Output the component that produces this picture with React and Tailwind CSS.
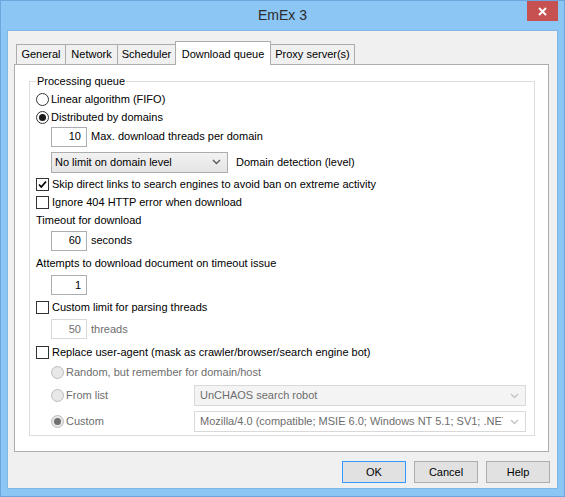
import clsx from 'clsx';

const Chevron = ({ muted }) => (
    <svg width="9" height="6" viewBox="0 0 9 6" className="shrink-0">
        <path d="M1 1 L4.5 4.5 L8 1" fill="none" stroke={muted ? '#c4c4c4' : '#5a5a5a'} strokeWidth="1.4" />
    </svg>
);

const Radio = ({ checked, disabled }) => (
    <span
        className={clsx(
            'flex h-[13px] w-[13px] shrink-0 items-center justify-center rounded-full border',
            disabled ? 'border-[#bcbcbc] bg-[#e8e8e8]' : 'border-[#333333] bg-white'
        )}
    >
        {checked && (
            <span className={clsx('h-[7px] w-[7px] rounded-full', disabled ? 'bg-[#6f6f6f]' : 'bg-[#1a1a1a]')} />
        )}
    </span>
);

const Checkbox = ({ checked }) => (
    <span className="flex h-[13px] w-[13px] shrink-0 items-center justify-center border border-[#333333] bg-white">
        {checked && (
            <svg width="11" height="11" viewBox="0 0 11 11">
                <path d="M2 5.5 L4.3 8 L9 2.5" fill="none" stroke="#000" strokeWidth="1.7" />
            </svg>
        )}
    </span>
);

const NumBox = ({ value, disabled }) => (
    <div
        className={clsx(
            'flex h-[20px] w-[36px] shrink-0 items-center justify-end border bg-white pr-[5px]',
            disabled ? 'border-[#d9d9d9] text-[#6d6d6d]' : 'border-[#abadb3]'
        )}
    >
        {value}
    </div>
);

const tabs = [
    { label: 'General', w: 'w-[50px]' },
    { label: 'Network', w: 'w-[53px]' },
    { label: 'Scheduler', w: 'w-[59px]' },
    { label: 'Download queue', w: 'w-[96px]', active: true },
    { label: 'Proxy server(s)', w: 'w-[85px]' },
];

const App = () => {
    return (
        <div className="flex h-[497px] w-[565px] flex-col border border-[#6ea5dc] bg-[#8cc6f5] font-['Liberation_Sans',Arial,sans-serif] text-[11px] text-black">
            {/* title bar */}
            <div className="grid h-[29px] shrink-0 grid-cols-[1fr_auto_1fr]">
                <div />
                <div className="flex items-center pb-[1px] text-[14px] text-[#2b2b2b]">EmEx 3</div>
                <div className="flex justify-end">
                    <div className="mr-[6px] flex h-[20px] w-[31px] items-center justify-center bg-[#c75050]">
                        <svg width="9" height="9" viewBox="0 0 9 9">
                            <path d="M1 1 L8 8 M8 1 L1 8" stroke="#fff" strokeWidth="2" />
                        </svg>
                    </div>
                </div>
            </div>

            {/* client area */}
            <div className="ml-[6px] flex h-[459px] w-[551px] flex-col border border-[#82b6e6] bg-[#f0f0f0] pt-[10px]">
                <div className="flex h-[23px] items-end pl-[8px]">
                    {tabs.map((tab) => (
                        <div
                            key={tab.label}
                            className={clsx(
                                '-ml-px flex shrink-0 justify-center border border-b-0 border-[#acacac] first:ml-0',
                                tab.w,
                                tab.active
                                    ? 'relative z-10 -mb-px h-[24px] items-start bg-white pt-[4px]'
                                    : 'h-[20px] items-center bg-[#f0f0f0]'
                            )}
                        >
                            {tab.label}
                        </div>
                    ))}
                </div>

                <div className="ml-[6px] h-[388px] w-[535px] shrink-0 border border-[#adadad] bg-white">
                    <fieldset className="ml-[14px] mt-[7px] h-[364px] w-[506px] border border-[#dcdcdc] pl-[6px]">
                        <legend className="px-[1px] leading-[18px]">Processing queue</legend>

                        <div className="flex h-[18px] items-center gap-[2px]">
                            <Radio />
                            <span>Linear algorithm (FIFO)</span>
                        </div>
                        <div className="flex h-[18px] items-center gap-[2px]">
                            <Radio checked />
                            <span>Distributed by domains</span>
                        </div>
                        <div className="flex h-[21px] items-center gap-[4px] pl-[15px]">
                            <NumBox value="10" />
                            <span>Max. download threads per domain</span>
                        </div>
                        <div className="mt-[4px] flex h-[22px] items-center gap-[8px] pl-[15px]">
                            <div className="flex h-[21px] w-[177px] items-center border border-[#acacac] bg-gradient-to-b from-[#f2f2f2] to-[#e5e5e5] pl-[3px] pr-[6px]">
                                <span className="flex-1">No limit on domain level</span>
                                <Chevron />
                            </div>
                            <span>Domain detection (level)</span>
                        </div>
                        <div className="mt-[2px] flex h-[18px] items-center gap-[3px]">
                            <Checkbox checked />
                            <span>Skip direct links to search engines to avoid ban on extreme activity</span>
                        </div>
                        <div className="flex h-[18px] items-center gap-[3px]">
                            <Checkbox />
                            <span>Ignore 404 HTTP error when download</span>
                        </div>
                        <div className="flex h-[18px] items-center">Timeout for download</div>
                        <div className="mt-[1px] flex h-[21px] items-center gap-[4px] pl-[15px]">
                            <NumBox value="60" />
                            <span>seconds</span>
                        </div>
                        <div className="mt-[3px] flex h-[18px] items-center">Attempts to download document on timeout issue</div>
                        <div className="mt-[3px] flex h-[20px] items-center pl-[15px]">
                            <NumBox value="1" />
                        </div>
                        <div className="mt-[3px] flex h-[18px] items-center gap-[3px]">
                            <Checkbox />
                            <span>Custom limit for parsing threads</span>
                        </div>
                        <div className="mt-[3px] flex h-[20px] items-center gap-[4px] pl-[15px] text-[#6d6d6d]">
                            <NumBox value="50" disabled />
                            <span>threads</span>
                        </div>
                        <div className="mt-[4px] flex h-[18px] items-center gap-[3px]">
                            <Checkbox />
                            <span>Replace user-agent (mask as crawler/browser/search engine bot)</span>
                        </div>

                        <div className="pl-[15px] text-[#6d6d6d]">
                            <div className="mt-[2px] flex h-[18px] items-center gap-[2px]">
                                <Radio disabled />
                                <span>Random, but remember for domain/host</span>
                            </div>
                            <div className="mt-[4px] flex h-[21px] items-center">
                                <div className="flex w-[143px] items-center gap-[2px]">
                                    <Radio disabled />
                                    <span>From list</span>
                                </div>
                                <div className="flex h-[21px] w-[332px] items-center border border-[#d9d9d9] bg-[#f4f4f4] pl-[5px] pr-[6px]">
                                    <span className="flex-1 overflow-hidden whitespace-nowrap">UnCHAOS search robot</span>
                                    <Chevron muted />
                                </div>
                            </div>
                            <div className="mt-[5px] flex h-[21px] items-center">
                                <div className="flex w-[143px] items-center gap-[2px]">
                                    <Radio checked disabled />
                                    <span>Custom</span>
                                </div>
                                <div className="flex h-[21px] w-[332px] items-center border border-[#d9d9d9] bg-white pl-[5px] pr-[6px]">
                                    <span className="w-[303px] overflow-hidden whitespace-nowrap">
                                        Mozilla/4.0 (compatible; MSIE 6.0; Windows NT 5.1; SV1; .NET CLR 2.0.50727)
                                    </span>
                                    <span className="flex flex-1 justify-end">
                                        <Chevron muted />
                                    </span>
                                </div>
                            </div>
                        </div>
                    </fieldset>
                </div>

                <div className="mt-[9px] flex justify-end gap-[8px] pr-[7px]">
                    <button className="flex h-[22px] w-[64px] items-center justify-center border border-[#3399ff] bg-[#e1e1e1]">OK</button>
                    <button className="flex h-[22px] w-[64px] items-center justify-center border border-[#adadad] bg-[#e1e1e1]">Cancel</button>
                    <button className="flex h-[22px] w-[64px] items-center justify-center border border-[#adadad] bg-[#e1e1e1]">Help</button>
                </div>
            </div>
        </div>
    );
};

export default App;
